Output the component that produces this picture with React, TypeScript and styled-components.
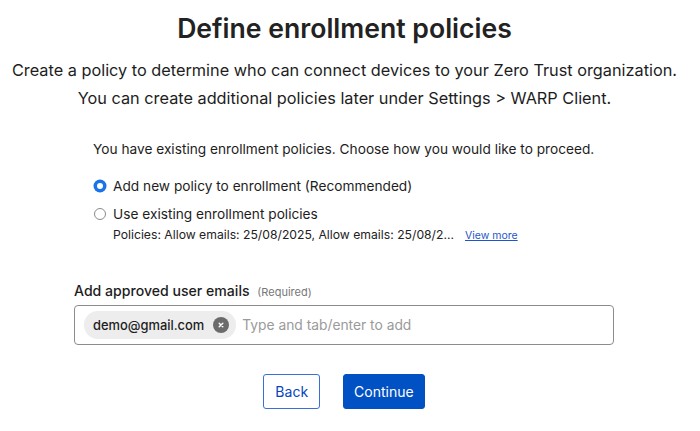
import React from 'react'
import styled, { createGlobalStyle } from 'styled-components';

const GlobalStyle = createGlobalStyle`
  body {
    margin: 0;
    background: #fff;
    font-family: Inter, "Noto Sans", "Liberation Sans", sans-serif;
    color: #1d1d1d;
  }
`;

const EnrollmentPolicies: React.FC = () => {
  return (
    <Page>
      <GlobalStyle />
      <Title>Define enrollment policies</Title>
      <Intro>
        Create a policy to determine who can connect devices to your Zero Trust organization.
        <br />
        You can create additional policies later under Settings &gt; WARP Client.
      </Intro>

      <Form>
        <Choice>
          <Prompt>You have existing enrollment policies. Choose how you would like to proceed.</Prompt>
          <Option>
            <Radio checked />
            <span>Add new policy to enrollment (Recommended)</span>
          </Option>
          <Option>
            <Radio />
            <span>Use existing enrollment policies</span>
          </Option>
          <Policies>
            Policies: Allow emails: 25/08/2025, Allow emails: 25/08/2...
            <ViewMore href="#">View more</ViewMore>
          </Policies>
        </Choice>

        <Label>
          Add approved user emails <Required>(Required)</Required>
        </Label>
        <EmailBox>
          <Chip>
            demo@gmail.com
            <ChipClose>
              <svg width="8" height="8" viewBox="0 0 8 8">
                <path d="M2.2 2.2 L5.8 5.8 M5.8 2.2 L2.2 5.8" stroke="#fff" strokeWidth="1.4" strokeLinecap="round" />
              </svg>
            </ChipClose>
          </Chip>
          <Placeholder>Type and tab/enter to add</Placeholder>
        </EmailBox>

        <Actions>
          <Button>Back</Button>
          <Button primary>Continue</Button>
        </Actions>
      </Form>
    </Page>
  )
}

export default EnrollmentPolicies;

// content column is 689px wide (centered at ~344)
const Page = styled.div`
    width: 689px;
    height: 431px;
    display: flex;
    flex-direction: column;
    align-items: center;
    overflow: hidden;
`;
const Title = styled.h1`
    margin: 11px 0 0;
    font-size: 26.6px;
    line-height: 34px;
    font-weight: 600;
    color: #222;
`;
const Intro = styled.p`
    margin: 11px 0 0;
    font-size: 16.3px;
    line-height: 28px;
    text-align: center;
    color: #1d1d1d;
`;
const Form = styled.div`
    width: 540px;
    align-self: flex-start;
    margin-left: 74px;
    display: flex;
    flex-direction: column;
`;
const Choice = styled.div`
    margin: 27px 0 0 19px;
    display: flex;
    flex-direction: column;
    font-size: 13.7px;
`;
const Prompt = styled.div`
    line-height: 20px;
    margin-bottom: 17px;
`;
const Option = styled.label`
    display: flex;
    align-items: center;
    gap: 7px;
    line-height: 20px;
    margin-bottom: 8px;
`;
const Radio = styled.span<{ checked?: boolean }>`
    width: 12px;
    height: 12px;
    box-sizing: border-box;
    border-radius: 50%;
    margin-left: 1px;
    border: ${p => p.checked ? '3px solid #1a73e8' : '1px solid #8a8a8a'};
    background: #fff;
    box-shadow: ${p => p.checked ? '0 0 0 0.5px #1a73e8' : 'none'};
`;
const Policies = styled.div`
    margin: -5px 0 0 20px;
    font-size: 12.2px;
    line-height: 16px;
    color: #222;
`;
const ViewMore = styled.a`
    margin-left: 11px;
    font-size: 10.5px;
    color: #1f55c8;
    text-decoration: underline;
`;
const Label = styled.div`
    margin-top: 37px;
    font-size: 14.1px;
    font-weight: 500;
    line-height: 20px;
    color: #1d1d1d;
`;
const Required = styled.span`
    margin-left: 4px;
    font-size: 11px;
    font-weight: 400;
    color: #777;
`;
const EmailBox = styled.div`
    margin-top: 3px;
    height: 40px;
    box-sizing: border-box;
    border: 1px solid #8c8c8c;
    border-radius: 4px;
    display: flex;
    align-items: center;
    padding: 0 9px;
    gap: 6px;
`;
const Chip = styled.div`
    height: 28px;
    display: flex;
    align-items: center;
    gap: 9px;
    padding: 0 7px 0 9px;
    border-radius: 14px;
    background: #ededed;
    font-size: 12.9px;
    font-weight: 500;
    color: #1d1d1d;
`;
const ChipClose = styled.span`
    width: 16px;
    height: 16px;
    border-radius: 50%;
    background: #6b6b6b;
    display: flex;
    align-items: center;
    justify-content: center;
`;
const Placeholder = styled.span`
    font-size: 13.8px;
    color: #9a9a9a;
`;
const Actions = styled.div`
    margin-top: 29px;
    display: flex;
    justify-content: center;
    gap: 23px;
`;
const Button = styled.button<{ primary?: boolean }>`
    height: 35px;
    padding: 0 ${p => p.primary ? '10px' : '11px'};
    border-radius: 3px;
    font-family: inherit;
    font-size: 14px;
    border: 1px solid ${p => p.primary ? '#0051c3' : '#3b6fd8'};
    background: ${p => p.primary ? '#0051c3' : '#fff'};
    color: ${p => p.primary ? '#fff' : '#0645c0'};
`;
